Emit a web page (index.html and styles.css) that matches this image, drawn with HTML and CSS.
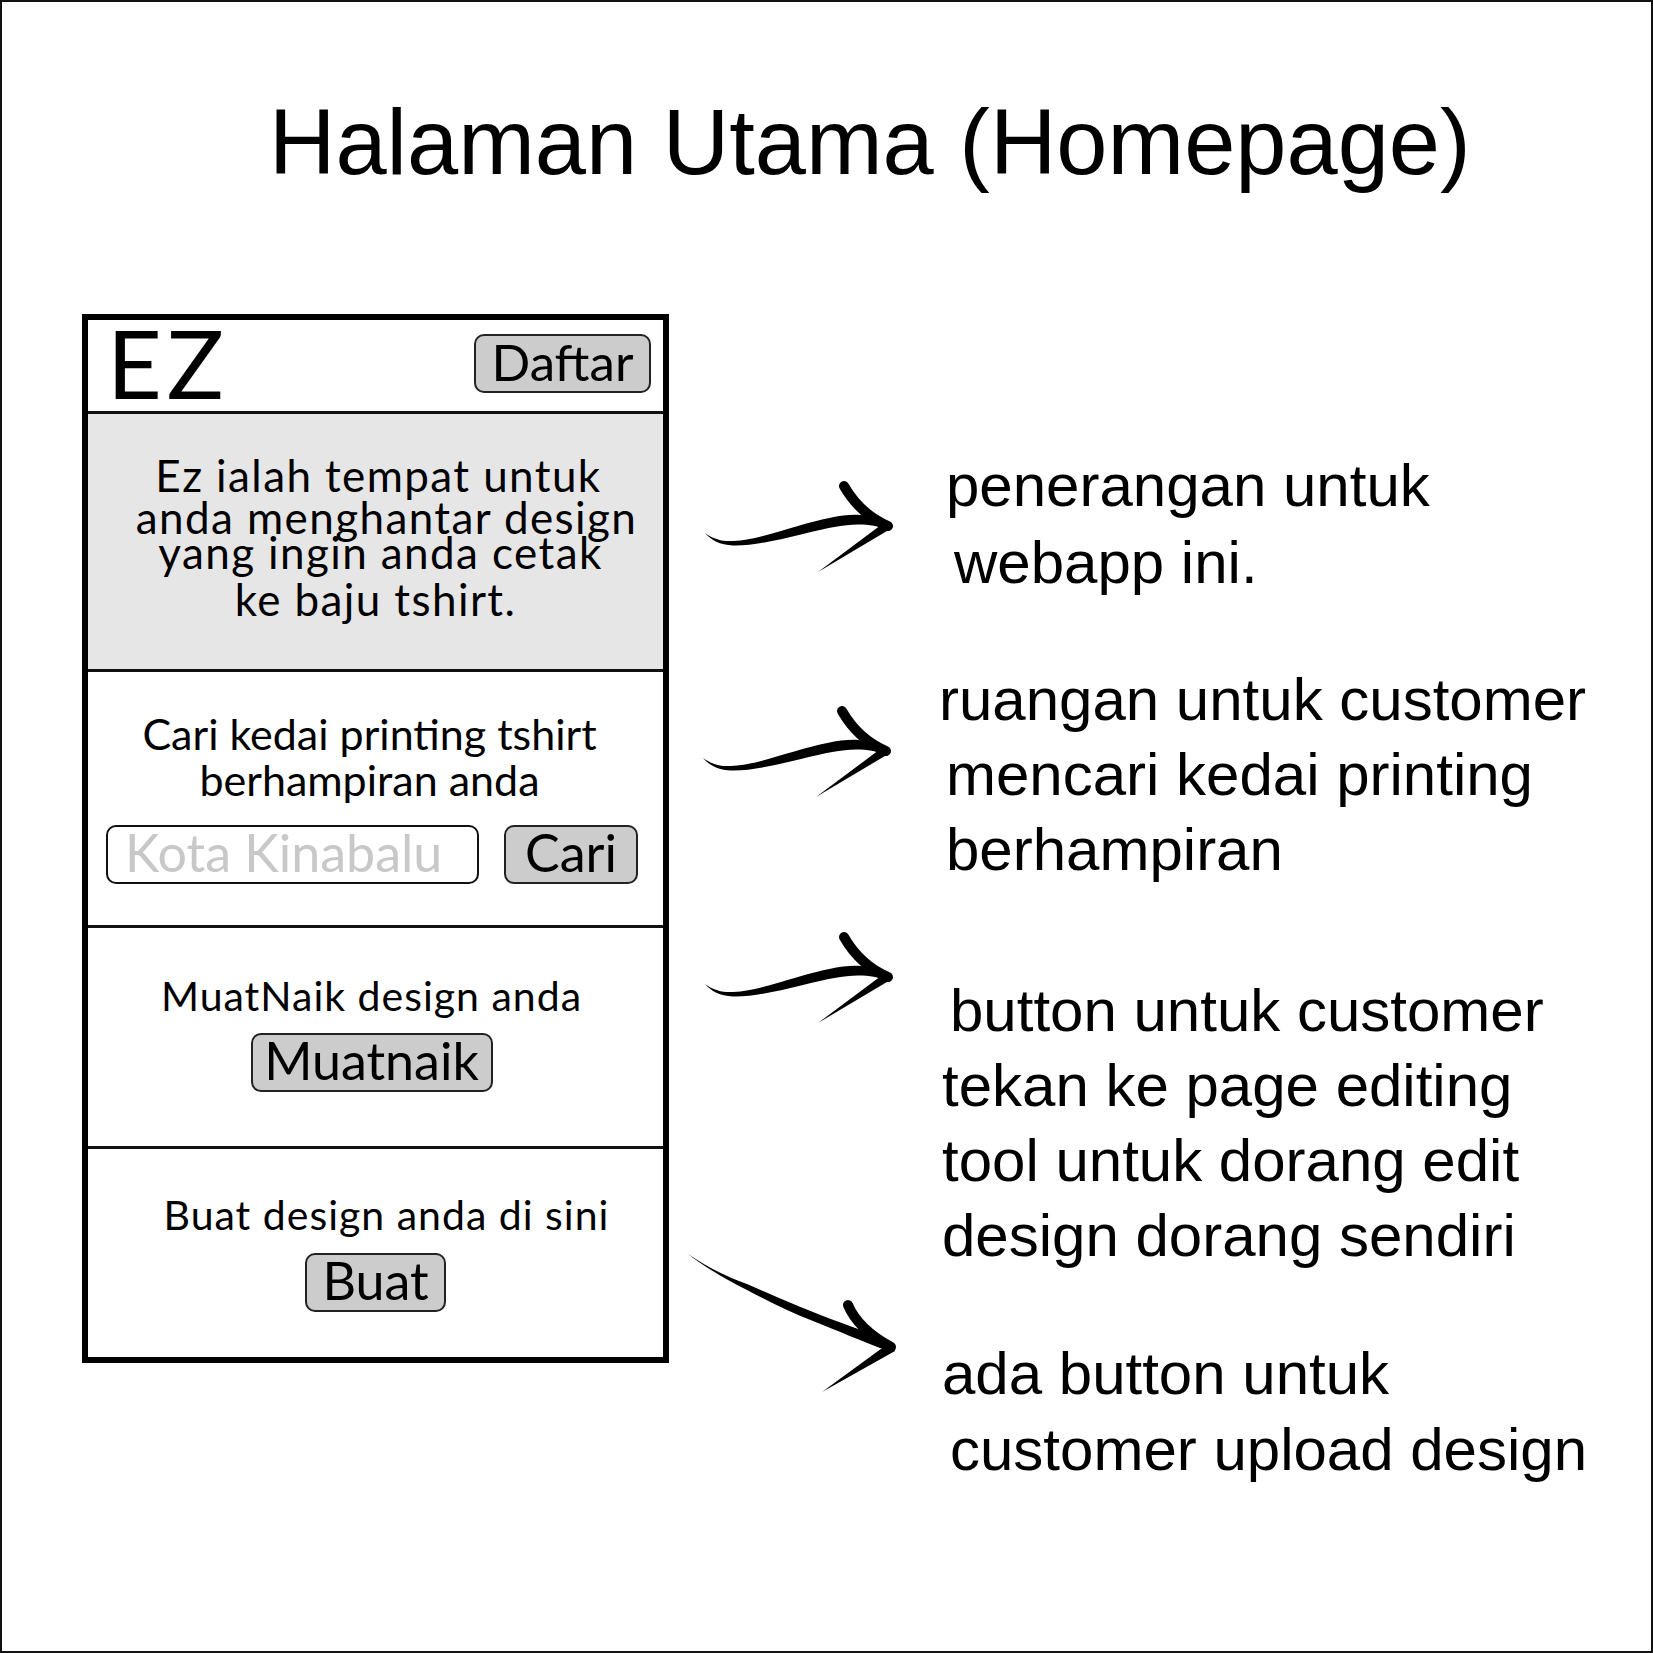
FILE: index.html
```html
<!DOCTYPE html>
<html lang="ms">
<head>
    <meta charset="UTF-8">
    <meta name="viewport" content="width=device-width, initial-scale=1.0">
    <title>Halaman Utama (Homepage)</title>
    <link rel="stylesheet" href="styles.css">
</head>
<body>
    <div class="sheet">
        <h1 class="title">Halaman Utama (Homepage)</h1>

        <div class="board">
            <div class="phone">
                <header class="phone-header">
                    <span class="logo">EZ</span>
                    <button class="btn btn-daftar">Daftar</button>
                </header>

                <section class="intro">
                    <p class="intro-text">
                        <span class="line line-1">Ez ialah tempat untuk</span>
                        <span class="line line-2">anda menghantar design</span>
                        <span class="line line-3">yang ingin anda cetak</span>
                        <span class="line line-4">ke baju tshirt.</span>
                    </p>
                </section>

                <section class="search">
                    <p class="caption">Cari kedai printing tshirt<br>berhampiran anda</p>
                    <div class="search-row">
                        <input class="search-input" type="text" placeholder="Kota Kinabalu">
                        <button class="btn btn-cari">Cari</button>
                    </div>
                </section>

                <section class="upload">
                    <p class="caption caption-sm">MuatNaik design anda</p>
                    <button class="btn btn-muatnaik">Muatnaik</button>
                </section>

                <section class="create">
                    <p class="caption caption-sm caption-create">Buat design anda di sini</p>
                    <button class="btn btn-buat">Buat</button>
                </section>
            </div>

            <svg class="arrows" viewBox="0 0 220 1090" width="220" height="1090">
                <defs>
                    <g id="arrow-right">
                        <path d="M27,219 C37,226 45,227.5 55,227 C75,226 95,219 120,212 C145,205 165,200 182,201 C195,202 205,206 212,210 L210,216 C200,212 192,210.5 180,210.5 C165,210.5 150,214 125,220 C100,226 75,232 55,231.5 C42,231 33,226 27,219 Z"/>
                        <path d="M166,172 Q182,200 210,212" fill="none" stroke="#000" stroke-width="10" stroke-linecap="round"/>
                        <path d="M207,208 L214,214 L140,258 Z"/>
                    </g>
                </defs>
                <use href="#arrow-right" transform="translate(-2 0)"/>
                <use href="#arrow-right" transform="translate(-4 225)"/>
                <use href="#arrow-right" transform="translate(-2 451)"/>
                <!-- last one points down to the bottom note -->
                <g>
                    <path d="M8,940 C30,955 48,963 67,970 C90,980 112,990 133,998 C158,1008 182,1016 200,1023 L213,1029 L210,1036 L200,1034 C182,1027 158,1017 133,1007 C110,998 88,987 67,976 C45,965 25,953 8,940 Z"/>
                    <path d="M168,991 Q178,1015 211,1033" fill="none" stroke="#000" stroke-width="10" stroke-linecap="round"/>
                    <path d="M209,1029 L215,1037 L142,1078 Z"/>
                </g>
            </svg>

            <div class="notes">
                <p class="note note-1">
                    <span class="line indent-sm">penerangan untuk</span>
                    <span class="line indent-lg">webapp ini.</span>
                </p>
                <p class="note note-2">
                    <span class="line outdent">ruangan untuk customer</span>
                    <span class="line indent-sm">mencari kedai printing</span>
                    <span class="line indent-sm">berhampiran</span>
                </p>
                <p class="note note-3">
                    <span class="line indent-md">button untuk customer</span>
                    <span class="line">tekan ke page editing</span>
                    <span class="line">tool untuk dorang edit</span>
                    <span class="line">design dorang sendiri</span>
                </p>
                <p class="note note-4">
                    <span class="line">ada button untuk</span>
                    <span class="line indent-md">customer upload design</span>
                </p>
            </div>
        </div>
    </div>
</body>
</html>
```

FILE: styles.css
```css
body {
    margin: 0;
    background: #fff;
}

.sheet {
    width: 1653px;
    height: 1653px;
    box-sizing: border-box;
    border: 2px solid #111;
    overflow: hidden;
    font-family: "Liberation Sans", Arial, sans-serif;
    color: #000;
}

.title {
    margin: 88px 0 0;
    padding-left: 267px;
    font-size: 92px;
    font-weight: 400;
    line-height: 104px;
}

.board {
    display: flex;
    align-items: flex-start;
    margin-top: 120px;
    padding-left: 80px;
}

/* phone mockup */
.phone {
    flex: none;
    width: 587px;
    box-sizing: border-box;
    border: 6px solid #000;
    font-family: Lato, "Open Sans", sans-serif;
    text-align: center;
}

.phone p {
    margin: 0;
}

.phone-header {
    height: 94px;
    box-sizing: border-box;
    display: flex;
    justify-content: space-between;
    align-items: flex-start;
    padding: 2px 12px 0 19px;
    border-bottom: 3px solid #111;
}

.logo {
    font-size: 95px;
    line-height: 80px;
    letter-spacing: 5px;
}

.btn {
    display: block;
    height: 59px;
    box-sizing: border-box;
    padding: 0 0 4px;
    border: 2px solid #222;
    border-radius: 10px;
    background: #ccc;
    color: #000;
    font-family: inherit;
    font-size: 52px;
    line-height: 51px;
    cursor: pointer;
}

.btn-daftar {
    width: 177px;
    margin-top: 12px;
    font-size: 51px;
}

.intro {
    height: 258px;
    box-sizing: border-box;
    padding-top: 40px;
    background: #e6e6e6;
    border-bottom: 3px solid #111;
}

.intro-text {
    font-size: 44px;
    line-height: 42px;
    letter-spacing: 1.4px;
}

.line {
    display: block;
    white-space: nowrap;
}

.line-1 {
    padding-left: 6px;
}

.line-2 {
    padding-left: 22px;
}

.line-3 {
    margin-top: -7px;
    padding-left: 10px;
}

.line-4 {
    margin-top: 5px;
}

.search {
    height: 256px;
    box-sizing: border-box;
    padding-top: 39px;
    border-bottom: 3px solid #111;
}

.caption {
    font-size: 43px;
    line-height: 46px;
}

.search .caption {
    padding-right: 12px;
}

.search-row {
    display: flex;
    align-items: center;
    gap: 25px;
    margin-top: 22px;
    padding-left: 18px;
}

.search-input {
    width: 373px;
    height: 59px;
    box-sizing: border-box;
    padding: 0 0 6px 17px;
    border: 2px solid #111;
    border-radius: 10px;
    background: #fff;
    font-family: inherit;
    font-size: 52px;
    outline: none;
}

.search-input::placeholder {
    color: #c8c8c8;
}

.btn-cari {
    width: 134px;
}

.upload {
    height: 221px;
    box-sizing: border-box;
    padding: 47px 8px 0 0;
    border-bottom: 3px solid #111;
}

.caption-sm {
    font-size: 41px;
    line-height: 41px;
    letter-spacing: 1px;
}

.btn-muatnaik {
    width: 242px;
    margin: 17px auto 0;
}

.create {
    height: 208px;
    box-sizing: border-box;
    padding-top: 45px;
}

.caption-create {
    padding-left: 22px;
}

.btn-buat {
    width: 141px;
    margin: 18px auto 0;
}

/* arrows + notes on the right */
.arrows {
    flex: none;
    margin-left: 11px;
}

.notes {
    margin-left: 42px;
    font-size: 60px;
}

.note {
    margin: 0;
}

.note-1 {
    margin-top: 133px;
    line-height: 77px;
}

.note-2 {
    margin-top: 61px;
    line-height: 75px;
}

.note-3 {
    margin-top: 86px;
    line-height: 75px;
}

.note-4 {
    margin-top: 63px;
    line-height: 76px;
}

.indent-sm {
    padding-left: 4px;
}

.indent-md {
    padding-left: 8px;
}

.indent-lg {
    padding-left: 12px;
}

.outdent {
    margin-left: -3px;
}
```
